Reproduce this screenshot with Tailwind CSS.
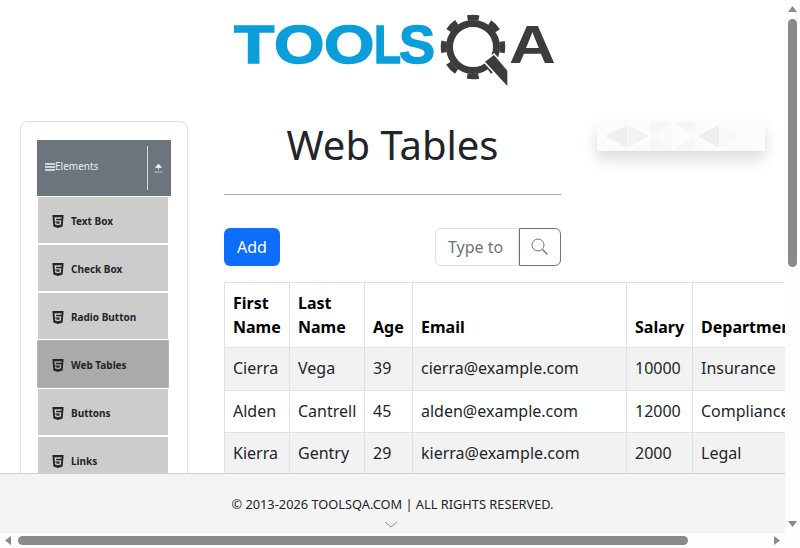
<!DOCTYPE html>
<html lang="en">
<head>
<meta charset="utf-8">
<title>Web Tables</title>
<script src="https://cdn.jsdelivr.net/npm/@tailwindcss/browser@4"></script>
</head>
<body>
<svg width="0" height="0" class="absolute">
  <symbol id="html5" viewBox="0 0 384 512">
    <path d="M0 32l34.9 395.8L191.5 480l157.6-52.2L384 32H0zm308.2 127.9H124.4l4.1 49.4h175.6l-13.6 148.4-97.9 27v.3h-1.1l-98.7-27.3-6-75.8h47.7L138 320l53.5 14.5 53.7-14.5 6-62.2H84.3L71.5 112.2h241.1l-4.4 47.7z"/>
  </symbol>
</svg>
<div class="relative w-[800px] h-[548px] overflow-hidden bg-[#fdfdfd] font-['Noto_Sans',sans-serif] text-[#212529]">
  <div class="relative w-[785px] h-[533px] overflow-hidden bg-white">

    <!-- logo -->
    <div class="pt-[14px] pl-[234px] h-[121px]">
      <svg width="322" height="72" viewBox="0 0 322 72" class="block">
        <g font-family="Liberation Sans" font-weight="700" font-size="54" fill="#0a9fdb" stroke="#0a9fdb" stroke-width="1.500">
          <text transform="translate(-1 49) scale(1.25 1)">T</text>
          <text transform="translate(40 49) scale(1.2 1)">O</text>
          <text transform="translate(90 49) scale(1.2 1)">O</text>
          <text transform="translate(140 49) scale(0.82 1)">L</text>
          <text transform="translate(165 49) scale(1 1)">S</text>
        </g>
        <circle cx="239" cy="33" r="23.500" fill="none" stroke="#3c3c3c" stroke-width="7"/>
        <circle cx="239" cy="33" r="29.500" fill="none" stroke="#3c3c3c" stroke-width="5.500" stroke-dasharray="11.500 11.670" stroke-dashoffset="5.750"/>
        <polygon points="251,47.700 260,41 273.300,56.700 273.300,72" fill="#3c3c3c" stroke="#fff" stroke-width="3" paint-order="stroke"/>
        <text transform="translate(275 49) scale(1.2 1)" font-family="Liberation Sans" font-weight="700" font-size="54" fill="#3c3c3c">A</text>
      </svg>
    </div>

    <div class="flex pl-[20px] items-start">
      <!-- sidebar -->
      <aside class="w-[168px] h-[480px] shrink-0 border border-[#dfdfdf] rounded-lg pt-[18px] pl-[16px]">
        <div class="w-[134px] h-[56px] bg-[#6c757d] flex items-center text-[#eeeeee] text-[10px] pb-[2px]">
          <svg width="10" height="8" viewBox="0 0 10 8" class="ml-[8px] shrink-0"><path d="M0 1h10M0 4h10M0 7h10" stroke="#f2f2f2" stroke-width="1.300"/></svg>
          <span class="mb-[2px]">Elements</span>
          <span class="ml-auto mt-[2px] w-px h-[44px] bg-[#d5d8da]"></span>
          <svg width="9" height="10" viewBox="0 0 9 10" class="ml-[6px] mr-[8px] mt-[2px] shrink-0"><path d="M4.500 1L1.500 4.500h6zM4.500 4v3M0.500 9h8" fill="#eeeeee" stroke="#eeeeee" stroke-width="0.700"/></svg>
        </div>
        <ul class="text-[10px] font-bold">
          <li class="mt-[1px] ml-[1px] w-[130px] h-[46px] pt-[2px] bg-[#cccccc] flex items-center gap-[7px] pl-[14px]"><svg class="w-[12px] h-[15px] fill-[#212529]"><use href="#html5"/></svg>Text Box</li>
          <li class="mt-[2px] ml-[1px] w-[130px] h-[46px] pt-[2px] bg-[#cccccc] flex items-center gap-[7px] pl-[14px]"><svg class="w-[12px] h-[15px] fill-[#212529]"><use href="#html5"/></svg>Check Box</li>
          <li class="mt-[2px] ml-[1px] w-[130px] h-[46px] pt-[2px] bg-[#cccccc] flex items-center gap-[7px] pl-[14px]"><svg class="w-[12px] h-[15px] fill-[#212529]"><use href="#html5"/></svg>Radio Button</li>
          <li class="mt-[1px] w-[132px] h-[48px] pt-[2px] bg-[#aaaaaa] border border-[#b8b8b8] flex items-center gap-[7px] pl-[14px]"><svg class="w-[12px] h-[15px] fill-[#212529]"><use href="#html5"/></svg>Web Tables</li>
          <li class="mt-[1px] ml-[1px] w-[130px] h-[46px] pt-[2px] bg-[#cccccc] flex items-center gap-[7px] pl-[14px]"><svg class="w-[12px] h-[15px] fill-[#212529]"><use href="#html5"/></svg>Buttons</li>
          <li class="mt-[2px] ml-[1px] w-[130px] h-[46px] pt-[2px] bg-[#cccccc] flex items-center gap-[7px] pl-[14px]"><svg class="w-[12px] h-[15px] fill-[#212529]"><use href="#html5"/></svg>Links</li>
        </ul>
      </aside>

      <main class="ml-[36px] shrink-0">
        <div class="flex items-start">
          <div class="w-[337px]">
            <h1 class="text-[40px] leading-[48px] text-center">Web Tables</h1>
            <div class="mt-[25px] h-px bg-[#a8a8a8]"></div>
          </div>
          <!-- ad banner -->
          <div class="ml-[36px] mt-[1px] w-[168px] h-[29px] bg-white shadow-[0_8px_16px_rgba(0,0,0,0.15)]">
            <svg width="168" height="29" viewBox="0 0 168 29" class="block">
              <rect width="168" height="29" fill="#fbfbfb"/>
              <rect x="54" width="44" height="29" fill="#f6f6f6"/>
              <polygon points="8,14 30,3 30,26" fill="#efefef"/>
              <polygon points="31,3 31,26 53,14" fill="#f3f3f3"/>
              <polygon points="53,14 76,1 76,28" fill="#fafafa"/>
              <polygon points="77,1 77,28 98,14" fill="#fbfbfb"/>
              <polygon points="100,14 122,3 122,26" fill="#efefef"/>
              <polygon points="123,3 123,26 145,14" fill="#f8f8f8"/>
              <path d="M0 8L8 14L0 20M53 14L31 0M53 14L31 29M76 0V29M98 14L122 0M98 14L122 29M145 14L168 2M145 14L168 27" fill="none" stroke="#ffffff" stroke-width="1"/>
            </svg>
          </div>
        </div>

        <div class="mt-[33px] flex items-stretch h-[38px] w-[337px]">
          <button class="w-[56px] bg-[#0d6efd] text-white rounded-md text-base">Add</button>
          <div class="ml-[155px] w-[84px] border border-[#dee2e6] rounded-l-md pl-[12px] flex items-center text-base text-[#6c757d] overflow-hidden whitespace-nowrap">Type to</div>
          <div class="w-[42px] border border-[#6c757d] rounded-r-md flex items-center justify-center">
            <svg width="18" height="18" viewBox="0 0 18 18"><circle cx="7" cy="7" r="6" fill="none" stroke="#6c757d"/><path d="M11.500 11.500l5 5" stroke="#6c757d" stroke-width="1.400"/></svg>
          </div>
        </div>

        <table class="mt-[16px] table-fixed w-[650px] text-base">
          <colgroup><col class="w-[65px]"><col class="w-[75px]"><col class="w-[48px]"><col class="w-[214px]"><col class="w-[66px]"><col class="w-[182px]"></colgroup>
          <thead>
            <tr class="h-[65px] font-bold text-black">
              <th class="border border-[#dee2e6] px-2 py-2 text-left align-bottom leading-6">First Name</th>
              <th class="border border-[#dee2e6] px-2 py-2 text-left align-bottom leading-6">Last Name</th>
              <th class="border border-[#dee2e6] px-2 py-2 text-left align-bottom leading-6">Age</th>
              <th class="border border-[#dee2e6] px-2 py-2 text-left align-bottom leading-6">Email</th>
              <th class="border border-[#dee2e6] px-2 py-2 text-left align-bottom leading-6">Salary</th>
              <th class="border border-[#dee2e6] px-2 py-2 text-left align-bottom leading-6">Department</th>
            </tr>
          </thead>
          <tbody>
            <tr class="h-[43px] bg-[#f2f2f2]">
              <td class="border border-[#dee2e6] px-2 pb-[2px]">Cierra</td>
              <td class="border border-[#dee2e6] px-2 pb-[2px]">Vega</td>
              <td class="border border-[#dee2e6] px-2 pb-[2px]">39</td>
              <td class="border border-[#dee2e6] px-2 pb-[2px]">cierra@example.com</td>
              <td class="border border-[#dee2e6] px-2 pb-[2px]">10000</td>
              <td class="border border-[#dee2e6] px-2 pb-[2px]">Insurance</td>
            </tr>
            <tr class="h-[42px]">
              <td class="border border-[#dee2e6] px-2 pb-[2px]">Alden</td>
              <td class="border border-[#dee2e6] px-2 pb-[2px]">Cantrell</td>
              <td class="border border-[#dee2e6] px-2 pb-[2px]">45</td>
              <td class="border border-[#dee2e6] px-2 pb-[2px]">alden@example.com</td>
              <td class="border border-[#dee2e6] px-2 pb-[2px]">12000</td>
              <td class="border border-[#dee2e6] px-2 pb-[2px]">Compliance</td>
            </tr>
            <tr class="h-[42px] bg-[#f2f2f2]">
              <td class="border border-[#dee2e6] px-2 pb-[2px]">Kierra</td>
              <td class="border border-[#dee2e6] px-2 pb-[2px]">Gentry</td>
              <td class="border border-[#dee2e6] px-2 pb-[2px]">29</td>
              <td class="border border-[#dee2e6] px-2 pb-[2px]">kierra@example.com</td>
              <td class="border border-[#dee2e6] px-2 pb-[2px]">2000</td>
              <td class="border border-[#dee2e6] px-2 pb-[2px]">Legal</td>
            </tr>
          </tbody>
        </table>
      </main>
    </div>

    <!-- fixed footer -->
    <footer class="absolute left-0 right-0 bottom-0 h-[60px] bg-[#f4f4f4] border-t border-[#cfcfcf] flex flex-col items-center">
      <p class="mt-[21px] text-[12.8px] leading-[18px] text-[#212529]">© 2013-2026 TOOLSQA.COM | ALL RIGHTS RESERVED.</p>
      <svg width="14" height="7" viewBox="0 0 14 7" class="mt-[8px] mr-[4px]"><path d="M1 1l6 5 6-5" fill="none" stroke="#8a8a8a"/></svg>
    </footer>
  </div>

  <!-- browser scrollbars -->
  <div class="absolute top-0 right-0 w-[15px] h-full bg-[#fdfdfd]">
    <svg width="9" height="6" viewBox="0 0 9 6" class="absolute left-[3px] top-[6px]"><polygon points="4.500,0 9,6 0,6" fill="#8a8a8a"/></svg>
    <div class="absolute left-[3px] top-[19px] w-[9px] h-[248px] rounded-full bg-[#8a8a8a]"></div>
    <svg width="9" height="6" viewBox="0 0 9 6" class="absolute left-[3px] top-[521px]"><polygon points="0,0 9,0 4.500,6" fill="#8a8a8a"/></svg>
  </div>
  <div class="absolute left-0 bottom-0 w-[785px] h-[15px] bg-[#fdfdfd]">
    <svg width="6" height="9" viewBox="0 0 6 9" class="absolute left-[5px] top-[3px]"><polygon points="6,0 6,9 0,4.500" fill="#8a8a8a"/></svg>
    <div class="absolute left-[18px] top-[3px] w-[670px] h-[9px] rounded-full bg-[#8a8a8a]"></div>
    <svg width="6" height="9" viewBox="0 0 6 9" class="absolute left-[774px] top-[3px]"><polygon points="0,0 6,4.500 0,9" fill="#8a8a8a"/></svg>
  </div>
</div>
</body>
</html>
